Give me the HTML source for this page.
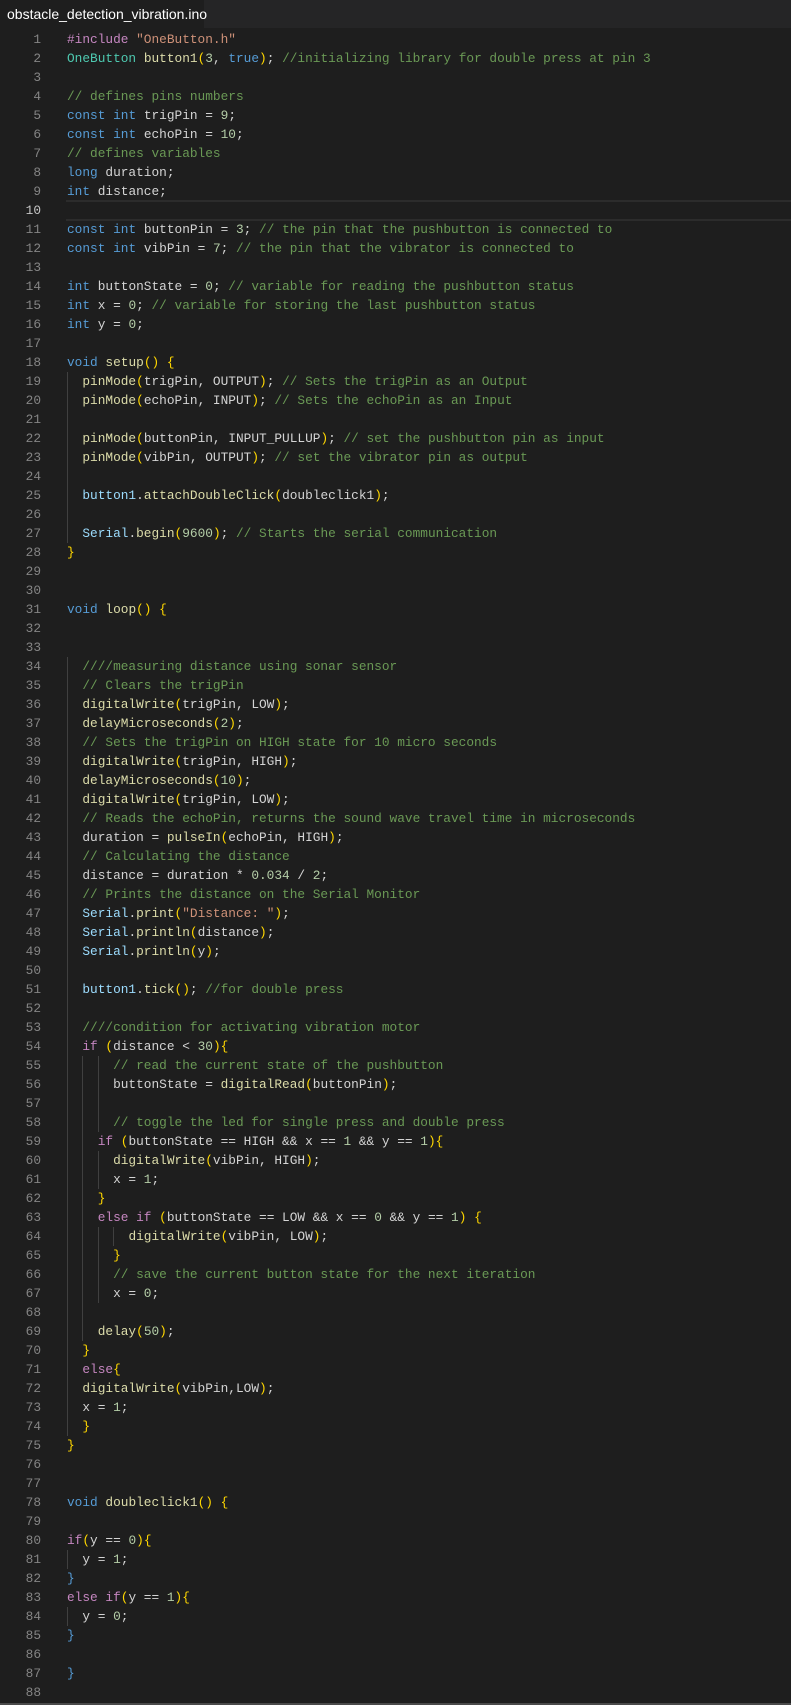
<!DOCTYPE html>
<html><head><meta charset="utf-8">
<style>
html,body{margin:0;padding:0;background:#1e1e1e;width:791px;height:1705px;overflow:hidden;}
#tabbar{position:absolute;left:0;top:0;width:791px;height:28px;background:#252526;}
#tab{position:absolute;left:0;top:0;width:204px;height:28px;background:#1e1e1e;color:#ffffff;font:14px "Liberation Sans",sans-serif;line-height:28px;padding-left:7px;box-sizing:border-box;}
#hl{position:absolute;left:66px;top:200px;width:725px;height:17px;border-top:2px solid #2c2c2c;border-bottom:2px solid #2c2c2c;}
#gut{position:absolute;left:0;top:30px;width:41px;text-align:right;font:12.8px "Liberation Mono",monospace;line-height:19px;color:#858585;}
#gut div{height:19px;}
#code{position:absolute;left:67px;top:30px;font:12.8px "Liberation Mono",monospace;line-height:19px;color:#d4d4d4;}
#code div{height:19px;white-space:pre;}
.g{position:absolute;width:1px;background:#404040;height:19px;}
.k{color:#569cd6}.c{color:#c586c0}.m{color:#6a9955}.f{color:#dcdcaa}.n{color:#b5cea8}.s{color:#ce9178}.t{color:#4ec9b0}.v{color:#9cdcfe}.p{color:#ffd700}.b{color:#569cd6}
#sb{position:absolute;left:0;top:1703px;width:791px;height:2px;background:#4a4a4a;}
</style></head><body>
<div id="tabbar"><div id="tab">obstacle_detection_vibration.ino</div></div>
<div id="hl"></div>
<div id="guides"></div>
<div id="gut"></div>
<div id="code">
<div><span class="c">#include</span> <span class="s">"OneButton.h"</span></div>
<div><span class="t">OneButton</span> <span class="f">button1</span><span class="p">(</span><span class="n">3</span>, <span class="k">true</span><span class="p">)</span>; <span class="m">//initializing library for double press at pin 3</span></div>
<div></div>
<div><span class="m">// defines pins numbers</span></div>
<div><span class="k">const</span> <span class="k">int</span> trigPin = <span class="n">9</span>;</div>
<div><span class="k">const</span> <span class="k">int</span> echoPin = <span class="n">10</span>;</div>
<div><span class="m">// defines variables</span></div>
<div><span class="k">long</span> duration;</div>
<div><span class="k">int</span> distance;</div>
<div></div>
<div><span class="k">const</span> <span class="k">int</span> buttonPin = <span class="n">3</span>; <span class="m">// the pin that the pushbutton is connected to</span></div>
<div><span class="k">const</span> <span class="k">int</span> vibPin = <span class="n">7</span>; <span class="m">// the pin that the vibrator is connected to</span></div>
<div></div>
<div><span class="k">int</span> buttonState = <span class="n">0</span>; <span class="m">// variable for reading the pushbutton status</span></div>
<div><span class="k">int</span> x = <span class="n">0</span>; <span class="m">// variable for storing the last pushbutton status</span></div>
<div><span class="k">int</span> y = <span class="n">0</span>;</div>
<div></div>
<div><span class="k">void</span> <span class="f">setup</span><span class="p">()</span> <span class="p">{</span></div>
<div>  <span class="f">pinMode</span><span class="p">(</span>trigPin, OUTPUT<span class="p">)</span>; <span class="m">// Sets the trigPin as an Output</span></div>
<div>  <span class="f">pinMode</span><span class="p">(</span>echoPin, INPUT<span class="p">)</span>; <span class="m">// Sets the echoPin as an Input</span></div>
<div></div>
<div>  <span class="f">pinMode</span><span class="p">(</span>buttonPin, INPUT_PULLUP<span class="p">)</span>; <span class="m">// set the pushbutton pin as input</span></div>
<div>  <span class="f">pinMode</span><span class="p">(</span>vibPin, OUTPUT<span class="p">)</span>; <span class="m">// set the vibrator pin as output</span></div>
<div></div>
<div>  <span class="v">button1</span>.<span class="f">attachDoubleClick</span><span class="p">(</span>doubleclick1<span class="p">)</span>;</div>
<div></div>
<div>  <span class="v">Serial</span>.<span class="f">begin</span><span class="p">(</span><span class="n">9600</span><span class="p">)</span>; <span class="m">// Starts the serial communication</span></div>
<div><span class="p">}</span></div>
<div></div>
<div></div>
<div><span class="k">void</span> <span class="f">loop</span><span class="p">()</span> <span class="p">{</span></div>
<div></div>
<div></div>
<div>  <span class="m">////measuring distance using sonar sensor</span></div>
<div>  <span class="m">// Clears the trigPin</span></div>
<div>  <span class="f">digitalWrite</span><span class="p">(</span>trigPin, LOW<span class="p">)</span>;</div>
<div>  <span class="f">delayMicroseconds</span><span class="p">(</span><span class="n">2</span><span class="p">)</span>;</div>
<div>  <span class="m">// Sets the trigPin on HIGH state for 10 micro seconds</span></div>
<div>  <span class="f">digitalWrite</span><span class="p">(</span>trigPin, HIGH<span class="p">)</span>;</div>
<div>  <span class="f">delayMicroseconds</span><span class="p">(</span><span class="n">10</span><span class="p">)</span>;</div>
<div>  <span class="f">digitalWrite</span><span class="p">(</span>trigPin, LOW<span class="p">)</span>;</div>
<div>  <span class="m">// Reads the echoPin, returns the sound wave travel time in microseconds</span></div>
<div>  duration = <span class="f">pulseIn</span><span class="p">(</span>echoPin, HIGH<span class="p">)</span>;</div>
<div>  <span class="m">// Calculating the distance</span></div>
<div>  distance = duration * <span class="n">0.034</span> / <span class="n">2</span>;</div>
<div>  <span class="m">// Prints the distance on the Serial Monitor</span></div>
<div>  <span class="v">Serial</span>.<span class="f">print</span><span class="p">(</span><span class="s">"Distance: "</span><span class="p">)</span>;</div>
<div>  <span class="v">Serial</span>.<span class="f">println</span><span class="p">(</span>distance<span class="p">)</span>;</div>
<div>  <span class="v">Serial</span>.<span class="f">println</span><span class="p">(</span>y<span class="p">)</span>;</div>
<div></div>
<div>  <span class="v">button1</span>.<span class="f">tick</span><span class="p">()</span>; <span class="m">//for double press</span></div>
<div></div>
<div>  <span class="m">////condition for activating vibration motor</span></div>
<div>  <span class="c">if</span> <span class="p">(</span>distance &lt; <span class="n">30</span><span class="p">){</span></div>
<div>      <span class="m">// read the current state of the pushbutton</span></div>
<div>      buttonState = <span class="f">digitalRead</span><span class="p">(</span>buttonPin<span class="p">)</span>;</div>
<div></div>
<div>      <span class="m">// toggle the led for single press and double press</span></div>
<div>    <span class="c">if</span> <span class="p">(</span>buttonState == HIGH &amp;&amp; x == <span class="n">1</span> &amp;&amp; y == <span class="n">1</span><span class="p">){</span></div>
<div>      <span class="f">digitalWrite</span><span class="p">(</span>vibPin, HIGH<span class="p">)</span>;</div>
<div>      x = <span class="n">1</span>;</div>
<div>    <span class="p">}</span></div>
<div>    <span class="c">else</span> <span class="c">if</span> <span class="p">(</span>buttonState == LOW &amp;&amp; x == <span class="n">0</span> &amp;&amp; y == <span class="n">1</span><span class="p">)</span> <span class="p">{</span></div>
<div>        <span class="f">digitalWrite</span><span class="p">(</span>vibPin, LOW<span class="p">)</span>;</div>
<div>      <span class="p">}</span></div>
<div>      <span class="m">// save the current button state for the next iteration</span></div>
<div>      x = <span class="n">0</span>;</div>
<div></div>
<div>    <span class="f">delay</span><span class="p">(</span><span class="n">50</span><span class="p">)</span>;</div>
<div>  <span class="p">}</span></div>
<div>  <span class="c">else</span><span class="p">{</span></div>
<div>  <span class="f">digitalWrite</span><span class="p">(</span>vibPin,LOW<span class="p">)</span>;</div>
<div>  x = <span class="n">1</span>;</div>
<div>  <span class="p">}</span></div>
<div><span class="p">}</span></div>
<div></div>
<div></div>
<div><span class="k">void</span> <span class="f">doubleclick1</span><span class="p">()</span> <span class="p">{</span></div>
<div></div>
<div><span class="c">if</span><span class="p">(</span>y == <span class="n">0</span><span class="p">){</span></div>
<div>  y = <span class="n">1</span>;</div>
<div><span class="b">}</span></div>
<div><span class="c">else</span> <span class="c">if</span><span class="p">(</span>y == <span class="n">1</span><span class="p">){</span></div>
<div>  y = <span class="n">0</span>;</div>
<div><span class="b">}</span></div>
<div></div>
<div><span class="b">}</span></div>
<div></div>
</div>
<div id="sb"></div>
<script>
(function(){
var lines=document.querySelectorAll('#code > div');
var gut=document.getElementById('gut');
var html='';
for(var i=0;i<lines.length;i++){
  html+='<div'+(i==9?' style="color:#c6c6c6"':'')+'>'+(i+1)+'</div>';
}
gut.innerHTML=html;
var ind=[];
for(var i=0;i<lines.length;i++){
  var t=lines[i].textContent;
  if(t.trim()===''){ind.push(-1);}else{ind.push(t.length-t.replace(/^ +/,'').length);}
}
var res=ind.slice();
for(var i=0;i<ind.length;i++){
  if(ind[i]<0){
    var p=0,n=0;
    for(var j=i-1;j>=0;j--){if(ind[j]>=0){p=ind[j];break;}}
    for(var j=i+1;j<ind.length;j++){if(ind[j]>=0){n=ind[j];break;}}
    res[i]=Math.min(p,n);
  }
}
var cw=7.68;
var g=document.getElementById('guides');var out='';
for(var i=0;i<res.length;i++){
  for(var k=0;k<res[i];k+=2){
    out+='<div class="g" style="left:'+(67+k*cw).toFixed(1)+'px;top:'+(30+i*19)+'px"></div>';
  }
}
g.innerHTML=out;
})();
</script>
</body></html>
